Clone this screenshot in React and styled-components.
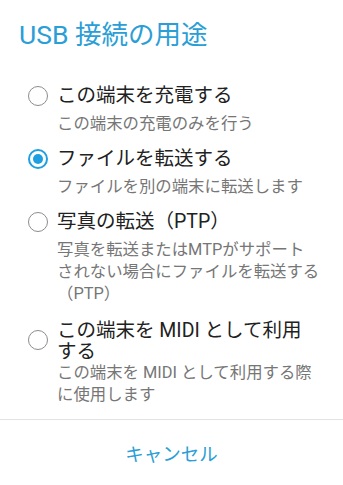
import React from 'react';
import styled, { createGlobalStyle } from 'styled-components';

const GlobalStyle = createGlobalStyle`
  html, body {
    margin: 0;
    padding: 0;
    background: #ffffff;
  }
  body {
    font-family: Roboto, "Noto Sans CJK JP", sans-serif;
    -webkit-font-smoothing: antialiased;
  }
`;

const Dialog = styled.div`
  width: 343px;
  height: 485px;
  background: #ffffff;
  display: flex;
  flex-direction: column;
  overflow: hidden;
`;

const Title = styled.h1`
  margin: 0;
  padding: 20px 19px 0;
  font-size: 26.5px;
  line-height: 30px;
  font-weight: 400;
  color: #2a9ed6;
`;

const OptionList = styled.div`
  display: flex;
  flex-direction: column;
  gap: 12px;
  padding: 34px 23px 0 28px;
`;

const Option = styled.div`
  display: flex;
  flex-direction: column;
  cursor: pointer;
`;

const OptionHead = styled.div`
  display: flex;
  align-items: center;
  gap: 9px;
`;

const Radio = styled.span`
  flex: none;
  box-sizing: border-box;
  width: 20px;
  height: 20px;
  border-radius: 50%;
  border: ${p => (p.checked ? '2px solid #1ea0e0' : '1.5px solid #8c8c8c')};
  display: flex;
  align-items: center;
  justify-content: center;

  &::after {
    content: '';
    display: ${p => (p.checked ? 'block' : 'none')};
    width: 10px;
    height: 10px;
    border-radius: 50%;
    background: #1ea0e0;
  }
`;

const OptionTitle = styled.div`
  font-size: 19.5px;
  line-height: ${p => (p.multi ? '21px' : '24px')};
  padding-top: ${p => (p.multi ? '3px' : '0')};
  color: #212121;
`;

const OptionSub = styled.div`
  margin: ${p => (p.multi ? '0' : '5px')} 0 0 29px;
  font-size: 16.4px;
  line-height: 22px;
  color: #767676;
`;

const Footer = styled.div`
  margin-top: auto;
  border-top: 1.5px solid #e2e2e2;
  height: 65px;
  display: flex;
  align-items: center;
  justify-content: center;
`;

const CancelButton = styled.button`
  border: none;
  background: none;
  padding: 0;
  font-family: Roboto, "Noto Sans CJK JP", sans-serif;
  font-size: 18.5px;
  color: #2a9ed6;
  cursor: pointer;
`;

const options = [
  { title: 'この端末を充電する', sub: 'この端末の充電のみを行う' },
  { title: 'ファイルを転送する', sub: 'ファイルを別の端末に転送します', checked: true },
  {
    title: '写真の転送（PTP）',
    sub: '写真を転送またはMTPがサポートされない場合にファイルを転送する（PTP）',
  },
  {
    title: 'この端末を MIDI として利用する',
    sub: 'この端末を MIDI として利用する際に使用します',
    multi: true,
  },
];

export default function App() {
  return (
    <>
      <GlobalStyle />
      <Dialog>
        <Title>USB 接続の用途</Title>
        <OptionList>
          {options.map(o => (
            <Option key={o.title}>
              <OptionHead>
                <Radio checked={o.checked} />
                <OptionTitle multi={o.multi}>{o.title}</OptionTitle>
              </OptionHead>
              <OptionSub multi={o.multi}>{o.sub}</OptionSub>
            </Option>
          ))}
        </OptionList>
        <Footer>
          <CancelButton>キャンセル</CancelButton>
        </Footer>
      </Dialog>
    </>
  );
}
